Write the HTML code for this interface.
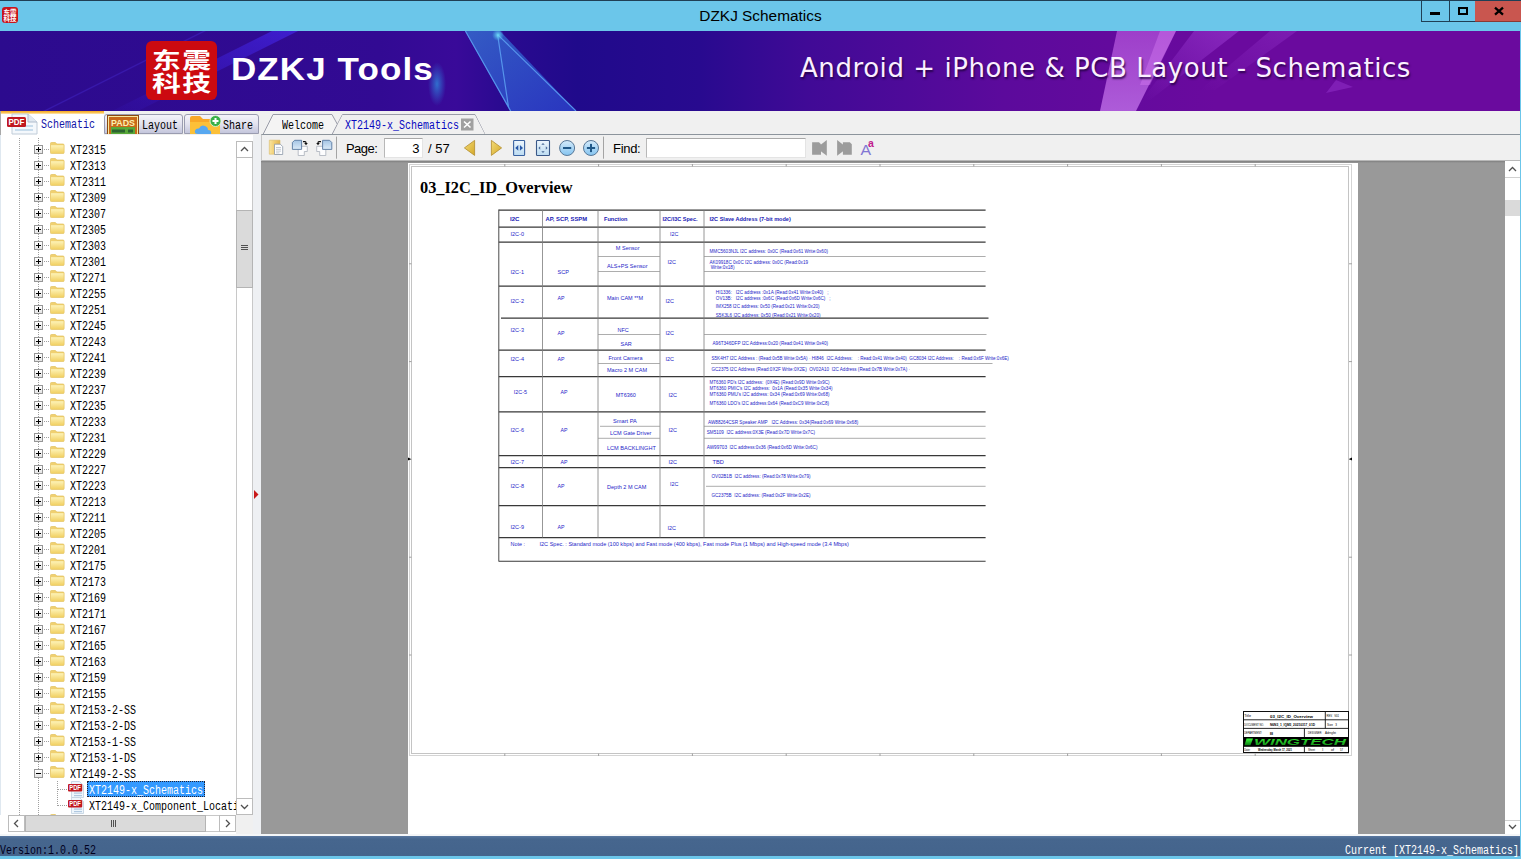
<!DOCTYPE html><html><head><meta charset='utf-8'><title>DZKJ Schematics</title><style>
*{box-sizing:border-box;margin:0;padding:0}
html,body{width:1521px;height:859px;overflow:hidden;background:#6bc6ea}
body{position:relative;font-family:'Liberation Sans',sans-serif}
.abs{position:absolute}
.mono{font-family:'Liberation Mono','Noto Sans CJK SC',monospace;font-size:12px;white-space:pre;line-height:16px;display:inline-block;transform:scaleX(.8333);transform-origin:0 0}
#titlebar{left:0;top:0;width:1521px;height:31px;background:#6bc6ea;border-top:1px solid #1f3f55}
#title{left:0;top:0;width:1521px;height:31px;line-height:31px;text-align:center;font-size:15.4px;color:#000}
#banner{left:0;top:31px;width:1520px;height:80px;overflow:hidden;background:linear-gradient(90deg,#2c0b8e 0%,#320a93 25%,#390a99 30%,#2a0a90 33%,#200a8b 38%,#280a8f 46%,#400a96 53%,#5c0a9c 66%,#6a0a9e 80%,#6a0a9e 100%)}
#tabsrow{left:0;top:111px;width:1520px;height:24px;background:#f0f0f0}
#left{left:0;top:135px;width:253px;height:701px;background:#fff;overflow:hidden;box-shadow:inset 1px 0 0 #dfe8f0}
#split{left:253px;top:135px;width:8px;height:701px;background:#eef0f3}
#toolbar{left:261px;top:134px;width:1259px;height:27px;background:#f0f0f0;border-top:1px solid #8c949c;border-left:1px solid #c8c8c8;border-bottom:1px solid #b8b8b8}
#viewer{left:261px;top:161px;width:1244px;height:673px;background:#999;overflow:hidden}
#vscroll{left:1505px;top:161px;width:15px;height:673px;background:#fff}
#status{left:0;top:836px;width:1520px;height:20px;background:linear-gradient(#5a78a0 0,#46668e 3px,#44648c 100%);color:#fff}
.row{position:absolute;left:0;height:16px;width:236px}
.pm{position:absolute;left:34px;top:4px;width:9px;height:9px;border:1px solid #969696;background:linear-gradient(#fff,#e4e4e4)}
.pm:before{content:'';position:absolute;left:1px;top:3px;width:5px;height:1px;background:#000}
.pm.plus:after{content:'';position:absolute;left:3px;top:1px;width:1px;height:5px;background:#000}
.hd{position:absolute;top:8px;height:1px;background-image:linear-gradient(90deg,#a0a0a0 50%,transparent 50%);background-size:2px 1px}
.vd{position:absolute;width:1px;background-image:linear-gradient(#a0a0a0 50%,transparent 50%);background-size:1px 2px}
.fold{position:absolute;left:50px;top:1px;width:15px;height:12px}
.lbl{position:absolute;top:2px;height:16px;color:#000}
.tbtxt{position:absolute;font-size:13px;line-height:16px;color:#000;white-space:pre}
</style></head><body>
<svg width='0' height='0' style='position:absolute'><defs><linearGradient id='fg' x1='0' y1='0' x2='0' y2='1'><stop offset='0' stop-color='#fdf3b8'/><stop offset='1' stop-color='#f2d164'/></linearGradient></defs></svg>
<div id='titlebar' class='abs'></div>
<div id='title' class='abs'>DZKJ Schematics</div>
<div class='abs' style="left:2px;top:7px;width:16px;height:16px;background:#c8141c;border-radius:3px;color:#fff;font-family:'Noto Sans CJK SC',sans-serif;font-weight:bold;font-size:6.5px;line-height:6.5px;text-align:center;padding-top:1.5px;letter-spacing:0">东震<br>科技</div>
<div class='abs' style='left:1421px;top:1px;width:55px;height:21px;border:1px solid #1f3f55;border-top:none;border-right:none'></div>
<div class='abs' style='left:1449px;top:1px;width:1px;height:20px;background:#1f3f55'></div>
<div class='abs' style='left:1475px;top:1px;width:46px;height:21px;background:#c9564f;border-bottom:1px solid #8a3a36'></div>
<div class='abs' style='left:1430px;top:12px;width:10px;height:3px;background:#000'></div>
<div class='abs' style='left:1458px;top:7px;width:10px;height:8px;border:2px solid #000;border-top-width:2px'></div>
<svg class='abs' style='left:1493px;top:6px' width='12' height='10' viewBox='0 0 12 10'><path d='M2 1.6 L10 8.6 M10 1.6 L2 8.6' stroke='#000' stroke-width='2.3' fill='none'/></svg>
<div id='banner' class='abs'>
<svg class='abs' style='left:0;top:0' width='1520' height='80' viewBox='0 31 1520 80'>
<defs>
<linearGradient id='tri' x1='0' y1='0' x2='1' y2='1'><stop offset='0' stop-color='#3470d0' stop-opacity='.8'/><stop offset='1' stop-color='#2c44d0' stop-opacity='.75'/></linearGradient>
<linearGradient id='pk' x1='0' y1='0' x2='0' y2='1'><stop offset='0' stop-color='#b050d8' stop-opacity='.75'/><stop offset='1' stop-color='#c070e8' stop-opacity='.8'/></linearGradient>
<linearGradient id='st' x1='1' y1='0' x2='0' y2='1'><stop offset='0' stop-color='#4426e8' stop-opacity='.7'/><stop offset='1' stop-color='#3a1cd0' stop-opacity='.1'/></linearGradient>
<linearGradient id='pk2' x1='1' y1='0' x2='0' y2='1'><stop offset='0' stop-color='#a040d8' stop-opacity='.55'/><stop offset='1' stop-color='#a040d8' stop-opacity='0'/></linearGradient>
<radialGradient id='gl2'><stop offset='0' stop-color='#70e0f8' stop-opacity='.95'/><stop offset='1' stop-color='#50c0f0' stop-opacity='0'/></radialGradient>
<radialGradient id='gl'><stop offset='0' stop-color='#2e90e0' stop-opacity='.75'/><stop offset='1' stop-color='#2e80e0' stop-opacity='0'/></radialGradient>
</defs>
<polygon points='272,31 298,31 138,111 112,111' fill='url(#st)'/>
<polygon points='203,31 206,31 46,111 43,111' fill='#4a30e0' opacity='.35'/>
<polygon points='465,31 500,31 576,111 510,111' fill='url(#tri)'/>
<path d='M465.4 31 L510.7 111 M497.6 34.6 L508.5 107 M497.6 34.6 L576 111' stroke='#5a9cf0' stroke-width='1.2' fill='none' opacity='.9'/>
<circle cx='498' cy='35' r='6' fill='url(#gl2)'/>
<ellipse cx='437' cy='84' rx='9' ry='22' fill='url(#gl)'/>
<polygon points='1117,31 1176,31 1136,111 1100,111' fill='url(#pk)'/>
<polygon points='1160,31 1176,31 1150,85 1140,85' fill='#e088f8' opacity='.35'/>
<polygon points='1194,31 1239,31 1150,100 1142,100' fill='url(#pk2)'/>
<polygon points='1270,31 1297,31 1215,90 1200,90' fill='url(#pk2)' opacity='.6'/>
<polygon points='1326,93 1353,87 1336,80' fill='#9030c8' opacity='.55'/>
</svg>
<div class='abs' style="left:146px;top:9.5px;width:71px;height:59px;background:#cc0a10;border-radius:6px"></div>
<div class='abs' id='logotxt' style="left:146px;top:16px;width:71px;text-align:center;color:#fff;font-family:'Noto Sans CJK SC',sans-serif;font-weight:bold;font-size:22px;line-height:23px;letter-spacing:1px;padding-left:1px;white-space:nowrap;transform:scaleX(1.31);transform-origin:50% 0">东震<br>科技</div>
<div class='abs' id='dzkj' style="left:230.5px;top:19.5px;font-family:'Liberation Sans',sans-serif;font-weight:bold;font-size:31.5px;line-height:36px;letter-spacing:1px;color:#fff;white-space:pre;transform:scaleX(1.11);transform-origin:0 0">DZKJ Tools</div>
<div class='abs' id='slogan' style="left:800px;top:20.5px;font-family:'DejaVu Sans','Liberation Sans',sans-serif;font-size:26px;letter-spacing:.56px;line-height:32px;color:#fbf0ff;white-space:pre;text-shadow:1px 2px 2px rgba(30,0,60,.8)">Android + iPhone &amp; PCB Layout - Schematics</div>
</div>
<div id='tabsrow' class='abs'></div>
<div class='abs' style='left:0;top:111px;width:104px;height:24px;background:linear-gradient(#f6a820 0,#fbc860 2px,#fff 3.5px);border-left:1px solid #a8a8a8'></div>
<div class='abs' style='left:104px;top:114px;width:79px;height:20px;background:linear-gradient(#f4f4fa,#e2e2ee 50%,#c4c6dc);border:1px solid #9a9cb0;border-bottom:1px solid #9a9cb0;border-radius:3px 3px 0 0'></div>
<div class='abs' style='left:184px;top:114px;width:75px;height:20px;background:linear-gradient(#f4f4fa,#e2e2ee 50%,#c4c6dc);border:1px solid #9a9cb0;border-radius:3px 3px 0 0'></div>
<svg class='abs' style='left:6px;top:112px' width='34' height='23' viewBox='0 0 34 23'>
<path d='M6 2 H22 L31 10 V22 H6 Z' fill='#f4f8fc' stroke='#c0ccd8' stroke-width='1'/>
<path d='M22 2 V10 H31' fill='#e0e8f0' stroke='#b0bccc' stroke-width='1'/>
<rect x='9' y='13' width='18' height='2' fill='#c8dcec'/><rect x='9' y='17' width='18' height='2' fill='#c8dcec'/>
<rect x='1' y='5' width='19' height='10' rx='1.5' fill='#c01820'/>
<text x='10.5' y='13' font-family='Liberation Sans,sans-serif' font-weight='bold' font-size='8.5' fill='#fff' text-anchor='middle' textLength='16' lengthAdjust='spacingAndGlyphs'>PDF</text>
</svg>
<div class='abs mono' style='left:41px;top:117px;color:#1414a8'>Schematic</div>
<svg class='abs' style='left:107px;top:115px' width='32' height='19' viewBox='0 0 32 19'>
<rect x='0' y='0' width='32' height='19' fill='#8a4a10'/>
<rect x='1' y='1' width='30' height='18' fill='#f8e8a0'/>
<rect x='2' y='2' width='28' height='17' fill='#c8691a'/>
<rect x='4' y='12' width='24' height='7' fill='#58a838'/>
<rect x='5' y='14.5' width='13' height='3' fill='#2c6430'/><rect x='21' y='14.5' width='5' height='3' fill='#2c6430'/>
<text x='16' y='10.6' font-family='Liberation Sans,sans-serif' font-weight='bold' font-size='9.5' fill='#fbf0b0' text-anchor='middle' textLength='24' lengthAdjust='spacingAndGlyphs'>PADS</text>
</svg>
<div class='abs mono' style='left:142px;top:118px;color:#000'>Layout</div>
<svg class='abs' style='left:189px;top:114px' width='34' height='20' viewBox='0 0 34 20'>
<path d='M1 4 Q1 2 3 2 H11 L14 5 H29 Q31 5 31 7 V21 H1 Z' fill='#f8a828'/>
<path d='M1 8 H31 V21 H1 Z' fill='#fcc038'/>
<path d='M9 20 Q5 20 6 16.5 Q7 14 10 14.5 Q12 10.5 16 12 Q19 13 19 16 Q23 16 22 20 Z' fill='#58a8f0'/>
<circle cx='26.5' cy='7' r='5.5' fill='#38b048' stroke='#e8f8e0' stroke-width='.8'/>
<path d='M26.5 4 V10 M23.5 7 H29.5' stroke='#fff' stroke-width='2'/>
</svg>
<div class='abs mono' style='left:223px;top:118px;color:#000'>Share</div>
<svg class='abs' style='left:261px;top:111px' width='1259' height='24' viewBox='261 111 1259 24'>
<path d='M263 134.5 L273 114.5 H332 L337.5 124.5 L332.5 134.5 Z' fill='#f4f4f4' stroke='#9a9ca8' stroke-width='1'/>
<path d='M261 134.5 H332 L342.5 114.5 H475 L485 134.5 H1520' fill='none' stroke='#9a9ca8' stroke-width='1'/>
<path d='M332.5 134.5 L342.5 115 H475 L485 134.5 Z' fill='#f0f0f0'/>
<rect x='461' y='118.5' width='12.5' height='12' fill='#a0a0a0'/>
<path d='M464 121.5 L470.5 127.5 M470.5 121.5 L464 127.5' stroke='#fff' stroke-width='1.6'/>
</svg>
<div class='abs mono' style='left:282px;top:118px;color:#000'>Welcome</div>
<div class='abs mono' style='left:345px;top:118px;color:#0808c0'>XT2149-x_Schematics</div>
<div id='left' class='abs'>
<div class='vd' style='left:19px;top:3px;height:678px'></div>
<div class='vd' style='left:38px;top:3px;height:678px'></div>
<div class='vd' style='left:57px;top:646px;height:25px'></div>
<div class='row' style='top:6px'><div class='pm plus'></div><div class='hd' style='left:44px;width:6px'></div><svg class='fold' viewBox='0 0 15 12'><path d='M.4 1.6 Q.4 .5 1.5 .5 H5.4 L6.8 2 H13 Q14.1 2 14.1 3.1 V10.6 Q14.1 11.6 13 11.6 H1.5 Q.4 11.6 .4 10.6 Z' fill='#f0d070' stroke='#e2c25c' stroke-width='.7'/><path d='M1 3.2 H13.6 V11 H1 Z' fill='url(#fg)'/></svg><div class='lbl mono' style='left:70px'>XT2315</div></div>
<div class='row' style='top:22px'><div class='pm plus'></div><div class='hd' style='left:44px;width:6px'></div><svg class='fold' viewBox='0 0 15 12'><path d='M.4 1.6 Q.4 .5 1.5 .5 H5.4 L6.8 2 H13 Q14.1 2 14.1 3.1 V10.6 Q14.1 11.6 13 11.6 H1.5 Q.4 11.6 .4 10.6 Z' fill='#f0d070' stroke='#e2c25c' stroke-width='.7'/><path d='M1 3.2 H13.6 V11 H1 Z' fill='url(#fg)'/></svg><div class='lbl mono' style='left:70px'>XT2313</div></div>
<div class='row' style='top:38px'><div class='pm plus'></div><div class='hd' style='left:44px;width:6px'></div><svg class='fold' viewBox='0 0 15 12'><path d='M.4 1.6 Q.4 .5 1.5 .5 H5.4 L6.8 2 H13 Q14.1 2 14.1 3.1 V10.6 Q14.1 11.6 13 11.6 H1.5 Q.4 11.6 .4 10.6 Z' fill='#f0d070' stroke='#e2c25c' stroke-width='.7'/><path d='M1 3.2 H13.6 V11 H1 Z' fill='url(#fg)'/></svg><div class='lbl mono' style='left:70px'>XT2311</div></div>
<div class='row' style='top:54px'><div class='pm plus'></div><div class='hd' style='left:44px;width:6px'></div><svg class='fold' viewBox='0 0 15 12'><path d='M.4 1.6 Q.4 .5 1.5 .5 H5.4 L6.8 2 H13 Q14.1 2 14.1 3.1 V10.6 Q14.1 11.6 13 11.6 H1.5 Q.4 11.6 .4 10.6 Z' fill='#f0d070' stroke='#e2c25c' stroke-width='.7'/><path d='M1 3.2 H13.6 V11 H1 Z' fill='url(#fg)'/></svg><div class='lbl mono' style='left:70px'>XT2309</div></div>
<div class='row' style='top:70px'><div class='pm plus'></div><div class='hd' style='left:44px;width:6px'></div><svg class='fold' viewBox='0 0 15 12'><path d='M.4 1.6 Q.4 .5 1.5 .5 H5.4 L6.8 2 H13 Q14.1 2 14.1 3.1 V10.6 Q14.1 11.6 13 11.6 H1.5 Q.4 11.6 .4 10.6 Z' fill='#f0d070' stroke='#e2c25c' stroke-width='.7'/><path d='M1 3.2 H13.6 V11 H1 Z' fill='url(#fg)'/></svg><div class='lbl mono' style='left:70px'>XT2307</div></div>
<div class='row' style='top:86px'><div class='pm plus'></div><div class='hd' style='left:44px;width:6px'></div><svg class='fold' viewBox='0 0 15 12'><path d='M.4 1.6 Q.4 .5 1.5 .5 H5.4 L6.8 2 H13 Q14.1 2 14.1 3.1 V10.6 Q14.1 11.6 13 11.6 H1.5 Q.4 11.6 .4 10.6 Z' fill='#f0d070' stroke='#e2c25c' stroke-width='.7'/><path d='M1 3.2 H13.6 V11 H1 Z' fill='url(#fg)'/></svg><div class='lbl mono' style='left:70px'>XT2305</div></div>
<div class='row' style='top:102px'><div class='pm plus'></div><div class='hd' style='left:44px;width:6px'></div><svg class='fold' viewBox='0 0 15 12'><path d='M.4 1.6 Q.4 .5 1.5 .5 H5.4 L6.8 2 H13 Q14.1 2 14.1 3.1 V10.6 Q14.1 11.6 13 11.6 H1.5 Q.4 11.6 .4 10.6 Z' fill='#f0d070' stroke='#e2c25c' stroke-width='.7'/><path d='M1 3.2 H13.6 V11 H1 Z' fill='url(#fg)'/></svg><div class='lbl mono' style='left:70px'>XT2303</div></div>
<div class='row' style='top:118px'><div class='pm plus'></div><div class='hd' style='left:44px;width:6px'></div><svg class='fold' viewBox='0 0 15 12'><path d='M.4 1.6 Q.4 .5 1.5 .5 H5.4 L6.8 2 H13 Q14.1 2 14.1 3.1 V10.6 Q14.1 11.6 13 11.6 H1.5 Q.4 11.6 .4 10.6 Z' fill='#f0d070' stroke='#e2c25c' stroke-width='.7'/><path d='M1 3.2 H13.6 V11 H1 Z' fill='url(#fg)'/></svg><div class='lbl mono' style='left:70px'>XT2301</div></div>
<div class='row' style='top:134px'><div class='pm plus'></div><div class='hd' style='left:44px;width:6px'></div><svg class='fold' viewBox='0 0 15 12'><path d='M.4 1.6 Q.4 .5 1.5 .5 H5.4 L6.8 2 H13 Q14.1 2 14.1 3.1 V10.6 Q14.1 11.6 13 11.6 H1.5 Q.4 11.6 .4 10.6 Z' fill='#f0d070' stroke='#e2c25c' stroke-width='.7'/><path d='M1 3.2 H13.6 V11 H1 Z' fill='url(#fg)'/></svg><div class='lbl mono' style='left:70px'>XT2271</div></div>
<div class='row' style='top:150px'><div class='pm plus'></div><div class='hd' style='left:44px;width:6px'></div><svg class='fold' viewBox='0 0 15 12'><path d='M.4 1.6 Q.4 .5 1.5 .5 H5.4 L6.8 2 H13 Q14.1 2 14.1 3.1 V10.6 Q14.1 11.6 13 11.6 H1.5 Q.4 11.6 .4 10.6 Z' fill='#f0d070' stroke='#e2c25c' stroke-width='.7'/><path d='M1 3.2 H13.6 V11 H1 Z' fill='url(#fg)'/></svg><div class='lbl mono' style='left:70px'>XT2255</div></div>
<div class='row' style='top:166px'><div class='pm plus'></div><div class='hd' style='left:44px;width:6px'></div><svg class='fold' viewBox='0 0 15 12'><path d='M.4 1.6 Q.4 .5 1.5 .5 H5.4 L6.8 2 H13 Q14.1 2 14.1 3.1 V10.6 Q14.1 11.6 13 11.6 H1.5 Q.4 11.6 .4 10.6 Z' fill='#f0d070' stroke='#e2c25c' stroke-width='.7'/><path d='M1 3.2 H13.6 V11 H1 Z' fill='url(#fg)'/></svg><div class='lbl mono' style='left:70px'>XT2251</div></div>
<div class='row' style='top:182px'><div class='pm plus'></div><div class='hd' style='left:44px;width:6px'></div><svg class='fold' viewBox='0 0 15 12'><path d='M.4 1.6 Q.4 .5 1.5 .5 H5.4 L6.8 2 H13 Q14.1 2 14.1 3.1 V10.6 Q14.1 11.6 13 11.6 H1.5 Q.4 11.6 .4 10.6 Z' fill='#f0d070' stroke='#e2c25c' stroke-width='.7'/><path d='M1 3.2 H13.6 V11 H1 Z' fill='url(#fg)'/></svg><div class='lbl mono' style='left:70px'>XT2245</div></div>
<div class='row' style='top:198px'><div class='pm plus'></div><div class='hd' style='left:44px;width:6px'></div><svg class='fold' viewBox='0 0 15 12'><path d='M.4 1.6 Q.4 .5 1.5 .5 H5.4 L6.8 2 H13 Q14.1 2 14.1 3.1 V10.6 Q14.1 11.6 13 11.6 H1.5 Q.4 11.6 .4 10.6 Z' fill='#f0d070' stroke='#e2c25c' stroke-width='.7'/><path d='M1 3.2 H13.6 V11 H1 Z' fill='url(#fg)'/></svg><div class='lbl mono' style='left:70px'>XT2243</div></div>
<div class='row' style='top:214px'><div class='pm plus'></div><div class='hd' style='left:44px;width:6px'></div><svg class='fold' viewBox='0 0 15 12'><path d='M.4 1.6 Q.4 .5 1.5 .5 H5.4 L6.8 2 H13 Q14.1 2 14.1 3.1 V10.6 Q14.1 11.6 13 11.6 H1.5 Q.4 11.6 .4 10.6 Z' fill='#f0d070' stroke='#e2c25c' stroke-width='.7'/><path d='M1 3.2 H13.6 V11 H1 Z' fill='url(#fg)'/></svg><div class='lbl mono' style='left:70px'>XT2241</div></div>
<div class='row' style='top:230px'><div class='pm plus'></div><div class='hd' style='left:44px;width:6px'></div><svg class='fold' viewBox='0 0 15 12'><path d='M.4 1.6 Q.4 .5 1.5 .5 H5.4 L6.8 2 H13 Q14.1 2 14.1 3.1 V10.6 Q14.1 11.6 13 11.6 H1.5 Q.4 11.6 .4 10.6 Z' fill='#f0d070' stroke='#e2c25c' stroke-width='.7'/><path d='M1 3.2 H13.6 V11 H1 Z' fill='url(#fg)'/></svg><div class='lbl mono' style='left:70px'>XT2239</div></div>
<div class='row' style='top:246px'><div class='pm plus'></div><div class='hd' style='left:44px;width:6px'></div><svg class='fold' viewBox='0 0 15 12'><path d='M.4 1.6 Q.4 .5 1.5 .5 H5.4 L6.8 2 H13 Q14.1 2 14.1 3.1 V10.6 Q14.1 11.6 13 11.6 H1.5 Q.4 11.6 .4 10.6 Z' fill='#f0d070' stroke='#e2c25c' stroke-width='.7'/><path d='M1 3.2 H13.6 V11 H1 Z' fill='url(#fg)'/></svg><div class='lbl mono' style='left:70px'>XT2237</div></div>
<div class='row' style='top:262px'><div class='pm plus'></div><div class='hd' style='left:44px;width:6px'></div><svg class='fold' viewBox='0 0 15 12'><path d='M.4 1.6 Q.4 .5 1.5 .5 H5.4 L6.8 2 H13 Q14.1 2 14.1 3.1 V10.6 Q14.1 11.6 13 11.6 H1.5 Q.4 11.6 .4 10.6 Z' fill='#f0d070' stroke='#e2c25c' stroke-width='.7'/><path d='M1 3.2 H13.6 V11 H1 Z' fill='url(#fg)'/></svg><div class='lbl mono' style='left:70px'>XT2235</div></div>
<div class='row' style='top:278px'><div class='pm plus'></div><div class='hd' style='left:44px;width:6px'></div><svg class='fold' viewBox='0 0 15 12'><path d='M.4 1.6 Q.4 .5 1.5 .5 H5.4 L6.8 2 H13 Q14.1 2 14.1 3.1 V10.6 Q14.1 11.6 13 11.6 H1.5 Q.4 11.6 .4 10.6 Z' fill='#f0d070' stroke='#e2c25c' stroke-width='.7'/><path d='M1 3.2 H13.6 V11 H1 Z' fill='url(#fg)'/></svg><div class='lbl mono' style='left:70px'>XT2233</div></div>
<div class='row' style='top:294px'><div class='pm plus'></div><div class='hd' style='left:44px;width:6px'></div><svg class='fold' viewBox='0 0 15 12'><path d='M.4 1.6 Q.4 .5 1.5 .5 H5.4 L6.8 2 H13 Q14.1 2 14.1 3.1 V10.6 Q14.1 11.6 13 11.6 H1.5 Q.4 11.6 .4 10.6 Z' fill='#f0d070' stroke='#e2c25c' stroke-width='.7'/><path d='M1 3.2 H13.6 V11 H1 Z' fill='url(#fg)'/></svg><div class='lbl mono' style='left:70px'>XT2231</div></div>
<div class='row' style='top:310px'><div class='pm plus'></div><div class='hd' style='left:44px;width:6px'></div><svg class='fold' viewBox='0 0 15 12'><path d='M.4 1.6 Q.4 .5 1.5 .5 H5.4 L6.8 2 H13 Q14.1 2 14.1 3.1 V10.6 Q14.1 11.6 13 11.6 H1.5 Q.4 11.6 .4 10.6 Z' fill='#f0d070' stroke='#e2c25c' stroke-width='.7'/><path d='M1 3.2 H13.6 V11 H1 Z' fill='url(#fg)'/></svg><div class='lbl mono' style='left:70px'>XT2229</div></div>
<div class='row' style='top:326px'><div class='pm plus'></div><div class='hd' style='left:44px;width:6px'></div><svg class='fold' viewBox='0 0 15 12'><path d='M.4 1.6 Q.4 .5 1.5 .5 H5.4 L6.8 2 H13 Q14.1 2 14.1 3.1 V10.6 Q14.1 11.6 13 11.6 H1.5 Q.4 11.6 .4 10.6 Z' fill='#f0d070' stroke='#e2c25c' stroke-width='.7'/><path d='M1 3.2 H13.6 V11 H1 Z' fill='url(#fg)'/></svg><div class='lbl mono' style='left:70px'>XT2227</div></div>
<div class='row' style='top:342px'><div class='pm plus'></div><div class='hd' style='left:44px;width:6px'></div><svg class='fold' viewBox='0 0 15 12'><path d='M.4 1.6 Q.4 .5 1.5 .5 H5.4 L6.8 2 H13 Q14.1 2 14.1 3.1 V10.6 Q14.1 11.6 13 11.6 H1.5 Q.4 11.6 .4 10.6 Z' fill='#f0d070' stroke='#e2c25c' stroke-width='.7'/><path d='M1 3.2 H13.6 V11 H1 Z' fill='url(#fg)'/></svg><div class='lbl mono' style='left:70px'>XT2223</div></div>
<div class='row' style='top:358px'><div class='pm plus'></div><div class='hd' style='left:44px;width:6px'></div><svg class='fold' viewBox='0 0 15 12'><path d='M.4 1.6 Q.4 .5 1.5 .5 H5.4 L6.8 2 H13 Q14.1 2 14.1 3.1 V10.6 Q14.1 11.6 13 11.6 H1.5 Q.4 11.6 .4 10.6 Z' fill='#f0d070' stroke='#e2c25c' stroke-width='.7'/><path d='M1 3.2 H13.6 V11 H1 Z' fill='url(#fg)'/></svg><div class='lbl mono' style='left:70px'>XT2213</div></div>
<div class='row' style='top:374px'><div class='pm plus'></div><div class='hd' style='left:44px;width:6px'></div><svg class='fold' viewBox='0 0 15 12'><path d='M.4 1.6 Q.4 .5 1.5 .5 H5.4 L6.8 2 H13 Q14.1 2 14.1 3.1 V10.6 Q14.1 11.6 13 11.6 H1.5 Q.4 11.6 .4 10.6 Z' fill='#f0d070' stroke='#e2c25c' stroke-width='.7'/><path d='M1 3.2 H13.6 V11 H1 Z' fill='url(#fg)'/></svg><div class='lbl mono' style='left:70px'>XT2211</div></div>
<div class='row' style='top:390px'><div class='pm plus'></div><div class='hd' style='left:44px;width:6px'></div><svg class='fold' viewBox='0 0 15 12'><path d='M.4 1.6 Q.4 .5 1.5 .5 H5.4 L6.8 2 H13 Q14.1 2 14.1 3.1 V10.6 Q14.1 11.6 13 11.6 H1.5 Q.4 11.6 .4 10.6 Z' fill='#f0d070' stroke='#e2c25c' stroke-width='.7'/><path d='M1 3.2 H13.6 V11 H1 Z' fill='url(#fg)'/></svg><div class='lbl mono' style='left:70px'>XT2205</div></div>
<div class='row' style='top:406px'><div class='pm plus'></div><div class='hd' style='left:44px;width:6px'></div><svg class='fold' viewBox='0 0 15 12'><path d='M.4 1.6 Q.4 .5 1.5 .5 H5.4 L6.8 2 H13 Q14.1 2 14.1 3.1 V10.6 Q14.1 11.6 13 11.6 H1.5 Q.4 11.6 .4 10.6 Z' fill='#f0d070' stroke='#e2c25c' stroke-width='.7'/><path d='M1 3.2 H13.6 V11 H1 Z' fill='url(#fg)'/></svg><div class='lbl mono' style='left:70px'>XT2201</div></div>
<div class='row' style='top:422px'><div class='pm plus'></div><div class='hd' style='left:44px;width:6px'></div><svg class='fold' viewBox='0 0 15 12'><path d='M.4 1.6 Q.4 .5 1.5 .5 H5.4 L6.8 2 H13 Q14.1 2 14.1 3.1 V10.6 Q14.1 11.6 13 11.6 H1.5 Q.4 11.6 .4 10.6 Z' fill='#f0d070' stroke='#e2c25c' stroke-width='.7'/><path d='M1 3.2 H13.6 V11 H1 Z' fill='url(#fg)'/></svg><div class='lbl mono' style='left:70px'>XT2175</div></div>
<div class='row' style='top:438px'><div class='pm plus'></div><div class='hd' style='left:44px;width:6px'></div><svg class='fold' viewBox='0 0 15 12'><path d='M.4 1.6 Q.4 .5 1.5 .5 H5.4 L6.8 2 H13 Q14.1 2 14.1 3.1 V10.6 Q14.1 11.6 13 11.6 H1.5 Q.4 11.6 .4 10.6 Z' fill='#f0d070' stroke='#e2c25c' stroke-width='.7'/><path d='M1 3.2 H13.6 V11 H1 Z' fill='url(#fg)'/></svg><div class='lbl mono' style='left:70px'>XT2173</div></div>
<div class='row' style='top:454px'><div class='pm plus'></div><div class='hd' style='left:44px;width:6px'></div><svg class='fold' viewBox='0 0 15 12'><path d='M.4 1.6 Q.4 .5 1.5 .5 H5.4 L6.8 2 H13 Q14.1 2 14.1 3.1 V10.6 Q14.1 11.6 13 11.6 H1.5 Q.4 11.6 .4 10.6 Z' fill='#f0d070' stroke='#e2c25c' stroke-width='.7'/><path d='M1 3.2 H13.6 V11 H1 Z' fill='url(#fg)'/></svg><div class='lbl mono' style='left:70px'>XT2169</div></div>
<div class='row' style='top:470px'><div class='pm plus'></div><div class='hd' style='left:44px;width:6px'></div><svg class='fold' viewBox='0 0 15 12'><path d='M.4 1.6 Q.4 .5 1.5 .5 H5.4 L6.8 2 H13 Q14.1 2 14.1 3.1 V10.6 Q14.1 11.6 13 11.6 H1.5 Q.4 11.6 .4 10.6 Z' fill='#f0d070' stroke='#e2c25c' stroke-width='.7'/><path d='M1 3.2 H13.6 V11 H1 Z' fill='url(#fg)'/></svg><div class='lbl mono' style='left:70px'>XT2171</div></div>
<div class='row' style='top:486px'><div class='pm plus'></div><div class='hd' style='left:44px;width:6px'></div><svg class='fold' viewBox='0 0 15 12'><path d='M.4 1.6 Q.4 .5 1.5 .5 H5.4 L6.8 2 H13 Q14.1 2 14.1 3.1 V10.6 Q14.1 11.6 13 11.6 H1.5 Q.4 11.6 .4 10.6 Z' fill='#f0d070' stroke='#e2c25c' stroke-width='.7'/><path d='M1 3.2 H13.6 V11 H1 Z' fill='url(#fg)'/></svg><div class='lbl mono' style='left:70px'>XT2167</div></div>
<div class='row' style='top:502px'><div class='pm plus'></div><div class='hd' style='left:44px;width:6px'></div><svg class='fold' viewBox='0 0 15 12'><path d='M.4 1.6 Q.4 .5 1.5 .5 H5.4 L6.8 2 H13 Q14.1 2 14.1 3.1 V10.6 Q14.1 11.6 13 11.6 H1.5 Q.4 11.6 .4 10.6 Z' fill='#f0d070' stroke='#e2c25c' stroke-width='.7'/><path d='M1 3.2 H13.6 V11 H1 Z' fill='url(#fg)'/></svg><div class='lbl mono' style='left:70px'>XT2165</div></div>
<div class='row' style='top:518px'><div class='pm plus'></div><div class='hd' style='left:44px;width:6px'></div><svg class='fold' viewBox='0 0 15 12'><path d='M.4 1.6 Q.4 .5 1.5 .5 H5.4 L6.8 2 H13 Q14.1 2 14.1 3.1 V10.6 Q14.1 11.6 13 11.6 H1.5 Q.4 11.6 .4 10.6 Z' fill='#f0d070' stroke='#e2c25c' stroke-width='.7'/><path d='M1 3.2 H13.6 V11 H1 Z' fill='url(#fg)'/></svg><div class='lbl mono' style='left:70px'>XT2163</div></div>
<div class='row' style='top:534px'><div class='pm plus'></div><div class='hd' style='left:44px;width:6px'></div><svg class='fold' viewBox='0 0 15 12'><path d='M.4 1.6 Q.4 .5 1.5 .5 H5.4 L6.8 2 H13 Q14.1 2 14.1 3.1 V10.6 Q14.1 11.6 13 11.6 H1.5 Q.4 11.6 .4 10.6 Z' fill='#f0d070' stroke='#e2c25c' stroke-width='.7'/><path d='M1 3.2 H13.6 V11 H1 Z' fill='url(#fg)'/></svg><div class='lbl mono' style='left:70px'>XT2159</div></div>
<div class='row' style='top:550px'><div class='pm plus'></div><div class='hd' style='left:44px;width:6px'></div><svg class='fold' viewBox='0 0 15 12'><path d='M.4 1.6 Q.4 .5 1.5 .5 H5.4 L6.8 2 H13 Q14.1 2 14.1 3.1 V10.6 Q14.1 11.6 13 11.6 H1.5 Q.4 11.6 .4 10.6 Z' fill='#f0d070' stroke='#e2c25c' stroke-width='.7'/><path d='M1 3.2 H13.6 V11 H1 Z' fill='url(#fg)'/></svg><div class='lbl mono' style='left:70px'>XT2155</div></div>
<div class='row' style='top:566px'><div class='pm plus'></div><div class='hd' style='left:44px;width:6px'></div><svg class='fold' viewBox='0 0 15 12'><path d='M.4 1.6 Q.4 .5 1.5 .5 H5.4 L6.8 2 H13 Q14.1 2 14.1 3.1 V10.6 Q14.1 11.6 13 11.6 H1.5 Q.4 11.6 .4 10.6 Z' fill='#f0d070' stroke='#e2c25c' stroke-width='.7'/><path d='M1 3.2 H13.6 V11 H1 Z' fill='url(#fg)'/></svg><div class='lbl mono' style='left:70px'>XT2153-2-SS</div></div>
<div class='row' style='top:582px'><div class='pm plus'></div><div class='hd' style='left:44px;width:6px'></div><svg class='fold' viewBox='0 0 15 12'><path d='M.4 1.6 Q.4 .5 1.5 .5 H5.4 L6.8 2 H13 Q14.1 2 14.1 3.1 V10.6 Q14.1 11.6 13 11.6 H1.5 Q.4 11.6 .4 10.6 Z' fill='#f0d070' stroke='#e2c25c' stroke-width='.7'/><path d='M1 3.2 H13.6 V11 H1 Z' fill='url(#fg)'/></svg><div class='lbl mono' style='left:70px'>XT2153-2-DS</div></div>
<div class='row' style='top:598px'><div class='pm plus'></div><div class='hd' style='left:44px;width:6px'></div><svg class='fold' viewBox='0 0 15 12'><path d='M.4 1.6 Q.4 .5 1.5 .5 H5.4 L6.8 2 H13 Q14.1 2 14.1 3.1 V10.6 Q14.1 11.6 13 11.6 H1.5 Q.4 11.6 .4 10.6 Z' fill='#f0d070' stroke='#e2c25c' stroke-width='.7'/><path d='M1 3.2 H13.6 V11 H1 Z' fill='url(#fg)'/></svg><div class='lbl mono' style='left:70px'>XT2153-1-SS</div></div>
<div class='row' style='top:614px'><div class='pm plus'></div><div class='hd' style='left:44px;width:6px'></div><svg class='fold' viewBox='0 0 15 12'><path d='M.4 1.6 Q.4 .5 1.5 .5 H5.4 L6.8 2 H13 Q14.1 2 14.1 3.1 V10.6 Q14.1 11.6 13 11.6 H1.5 Q.4 11.6 .4 10.6 Z' fill='#f0d070' stroke='#e2c25c' stroke-width='.7'/><path d='M1 3.2 H13.6 V11 H1 Z' fill='url(#fg)'/></svg><div class='lbl mono' style='left:70px'>XT2153-1-DS</div></div>
<div class='row' style='top:630px'><div class='pm'></div><div class='hd' style='left:44px;width:6px'></div><svg class='fold' viewBox='0 0 15 12'><path d='M.4 1.6 Q.4 .5 1.5 .5 H5.4 L6.8 2 H13 Q14.1 2 14.1 3.1 V10.6 Q14.1 11.6 13 11.6 H1.5 Q.4 11.6 .4 10.6 Z' fill='#f0d070' stroke='#e2c25c' stroke-width='.7'/><path d='M1 3.2 H13.6 V11 H1 Z' fill='url(#fg)'/></svg><div class='lbl mono' style='left:70px'>XT2149-2-SS</div></div>
<div class='row' style='top:646px'><div class='hd' style='left:58px;width:10px'></div><svg style='position:absolute;left:68px;top:0' width='16' height='17' viewBox='0 0 16 17'><path d='M3.5 .5 H11.5 L15.5 4.5 V16.5 H3.5 Z' fill='#eef6fc' stroke='#c0d0e0' stroke-width='.8'/><rect x='6' y='11.5' width='8' height='1.2' fill='#b0c8e0'/><rect x='6' y='14' width='8' height='1.2' fill='#b0c8e0'/><rect x='0' y='3' width='14.2' height='7.6' rx='1' fill='#c01820'/><text x='7.1' y='9.3' font-family='Liberation Sans,sans-serif' font-weight='bold' font-size='6.3' fill='#fff' text-anchor='middle' textLength='11.6' lengthAdjust='spacingAndGlyphs'>PDF</text></svg><div class='abs' style='left:87px;top:0;width:118px;height:16px;background:#3399ff;outline:1px dotted #223;outline-offset:-1px'></div><div class='lbl mono' style='left:89px;color:#fff'>XT2149-x_Schematics</div></div>
<div class='row' style='top:662px'><div class='hd' style='left:58px;width:10px'></div><svg style='position:absolute;left:68px;top:0' width='16' height='17' viewBox='0 0 16 17'><path d='M3.5 .5 H11.5 L15.5 4.5 V16.5 H3.5 Z' fill='#eef6fc' stroke='#c0d0e0' stroke-width='.8'/><rect x='6' y='11.5' width='8' height='1.2' fill='#b0c8e0'/><rect x='6' y='14' width='8' height='1.2' fill='#b0c8e0'/><rect x='0' y='3' width='14.2' height='7.6' rx='1' fill='#c01820'/><text x='7.1' y='9.3' font-family='Liberation Sans,sans-serif' font-weight='bold' font-size='6.3' fill='#fff' text-anchor='middle' textLength='11.6' lengthAdjust='spacingAndGlyphs'>PDF</text></svg><div class='lbl mono' style='left:89px'>XT2149-x_Component_Location</div></div>
<div class='row' style='top:678px'><svg class='fold' viewBox='0 0 15 12'><path d='M.4 1.6 Q.4 .5 1.5 .5 H5.4 L6.8 2 H13 Q14.1 2 14.1 3.1 V10.6 Q14.1 11.6 13 11.6 H1.5 Q.4 11.6 .4 10.6 Z' fill='#f0d070' stroke='#e2c25c' stroke-width='.7'/><path d='M1 3.2 H13.6 V11 H1 Z' fill='url(#fg)'/></svg></div>
<div class='abs' style='left:236px;top:6px;width:17px;height:673px;background:#fff;border:1px solid #c8c8c8'></div>
<div class='abs' style='left:236px;top:6px;width:17px;height:17px;border:1px solid #bcbcbc;background:#fff'></div>
<svg class='abs' style='left:240px;top:11px' width='9' height='6'><path d='M1 5 L4.5 1.5 L8 5' stroke='#505050' stroke-width='1.3' fill='none'/></svg>
<div class='abs' style='left:236px;top:75px;width:17px;height:78px;background:#dadada;border:1px solid #b4b4b4'></div>
<div class='abs' style='left:241px;top:110px;width:7px;height:1px;background:#505050;box-shadow:0 2px 0 #505050,0 4px 0 #505050'></div>
<div class='abs' style='left:236px;top:663px;width:17px;height:17px;border:1px solid #bcbcbc;background:#fff'></div>
<svg class='abs' style='left:240px;top:669px' width='9' height='6'><path d='M1 1 L4.5 4.5 L8 1' stroke='#505050' stroke-width='1.3' fill='none'/></svg>
<div class='abs' style='left:0;top:680px;width:253px;height:21px;background:#fff'></div>
<div class='abs' style='left:236px;top:680px;width:17px;height:21px;background:#f0f0f0'></div>
<div class='abs' style='left:8px;top:680px;width:228px;height:17px;background:#fff;border:1px solid #c8c8c8'></div>
<div class='abs' style='left:8px;top:680px;width:17px;height:17px;border:1px solid #bcbcbc;background:#fff'></div>
<svg class='abs' style='left:13px;top:684px' width='6' height='9'><path d='M5 1 L1.5 4.5 L5 8' stroke='#505050' stroke-width='1.3' fill='none'/></svg>
<div class='abs' style='left:25px;top:680px;width:181px;height:17px;background:#dadada;border:1px solid #b4b4b4'></div>
<div class='abs' style='left:111px;top:685px;width:1px;height:7px;background:#505050;box-shadow:2px 0 0 #505050,4px 0 0 #505050'></div>
<div class='abs' style='left:219px;top:680px;width:17px;height:17px;border:1px solid #bcbcbc;background:#fff'></div>
<svg class='abs' style='left:225px;top:684px' width='6' height='9'><path d='M1 1 L4.5 4.5 L1 8' stroke='#505050' stroke-width='1.3' fill='none'/></svg>
</div>
<div id='split' class='abs'></div>
<svg class='abs' style='left:254px;top:490px' width='5' height='9'><path d='M0 0 L4.5 4.5 L0 9 Z' fill='#c81818'/></svg>
<div id='toolbar' class='abs'></div>
<svg class='abs' style='left:261px;top:134px' width='640' height='27' viewBox='261 134 640 27'>
<defs><linearGradient id='yg' x1='0' y1='0' x2='1' y2='0'><stop offset='0' stop-color='#f8e4a0'/><stop offset='.5' stop-color='#f0cc70'/><stop offset='1' stop-color='#e0b450'/></linearGradient><linearGradient id='bg1' x1='0' y1='0' x2='0' y2='1'><stop offset='0' stop-color='#a4c4e4'/><stop offset='1' stop-color='#dcebf8'/></linearGradient><linearGradient id='gd' x1='0' y1='0' x2='1' y2='1'><stop offset='0' stop-color='#f4dc78'/><stop offset='1' stop-color='#d4a828'/></linearGradient><linearGradient id='zc' x1='0' y1='0' x2='0' y2='1'><stop offset='0' stop-color='#d4eafa'/><stop offset='1' stop-color='#84c4f0'/></linearGradient><linearGradient id='fw' x1='0' y1='0' x2='0' y2='1'><stop offset='0' stop-color='#eef6fd'/><stop offset='1' stop-color='#bcdcf2'/></linearGradient></defs>
<path d='M269.3 140.2 H280 V154.2 H269.3 Z' fill='url(#yg)' stroke='#d8b868' stroke-width='.6'/>
<path d='M274.5 144.2 H280.3 L282.7 146.6 V154.5 H274.5 Z' fill='#fdfdfe' stroke='#8c98a8' stroke-width='.8'/>
<path d='M276 147.5 H281 M276 149.3 H281 M276 151.1 H281 M276 152.9 H279.5' stroke='#9aa8b8' stroke-width='.6'/>
<path d='M298.2 146.3 H307.3 V151.5 H304.3 V155.5 H298.2 Z' fill='#fdfdfe' stroke='#aab0ba' stroke-width='.8'/>
<path d='M294.6 140.3 H301.6 V149.4 H292.4 V142.5 Z' fill='url(#bg1)' stroke='#5878a0' stroke-width='.9'/>
<path d='M303 141.6 H305 Q306 141.6 306 142.8 V143.4' fill='none' stroke='#101010' stroke-width='1.2'/><path d='M304.2 143 H307.8 L306 145.2 Z' fill='#101010'/>
<path d='M325.8 146.3 H316.7 V151.5 H319.7 V155.5 H325.8 Z' fill='#fdfdfe' stroke='#aab0ba' stroke-width='.8'/>
<path d='M322.6 140.3 H329.6 L331.8 142.5 V149.4 H322.6 Z' fill='url(#bg1)' stroke='#5878a0' stroke-width='.9'/>
<path d='M321 141.6 H319 Q318 141.6 318 142.8 V143.4' fill='none' stroke='#101010' stroke-width='1.2'/><path d='M316.2 143 H319.8 L318 145.2 Z' fill='#101010'/>
<path d='M336.5 136.6 V158.7 M603.5 136.6 V158.7' stroke='#a4a4a4' stroke-width='1'/>
<path d='M474.6 140.4 V155.4 L464.4 147.9 Z' fill='url(#gd)' stroke='#b89438' stroke-width='.9' stroke-linejoin='round'/>
<path d='M491.4 140.4 V155.4 L501.6 147.9 Z' fill='url(#gd)' stroke='#b89438' stroke-width='.9' stroke-linejoin='round'/>
<rect x='513.6' y='140.5' width='11' height='15' rx='.8' fill='url(#fw)' stroke='#3a62a0' stroke-width='1.1'/>
<path d='M518.3 145 V150.8 L515.2 147.9 Z M519.9 145 V150.8 L523 147.9 Z' fill='#2858a8'/>
<rect x='536.5' y='140.5' width='13' height='15' rx='.8' fill='url(#fw)' stroke='#3a5888' stroke-width='1.1'/>
<path d='M543 143 L541.3 144.8 H544.7 Z M543 153 L541.3 151.2 H544.7 Z M538.4 148 L540.2 146.2 V149.8 Z M547.6 148 L545.8 146.2 V149.8 Z' fill='#4a6a98'/>
<circle cx='567.1' cy='148' r='7.5' fill='url(#zc)' stroke='#587898' stroke-width='1'/>
<rect x='563' y='147' width='8.2' height='2' fill='#205888'/>
<circle cx='591' cy='148' r='7.5' fill='url(#zc)' stroke='#587898' stroke-width='1'/>
<rect x='586.9' y='147' width='8.2' height='2' fill='#205888'/><rect x='590' y='143.9' width='2' height='8.2' fill='#205888'/>
<path d='M812.1 142.2 H819 L821 144.2 V154.8 H812.1 Z' fill='#9c9c9c'/><path d='M826.8 140 V155.8 L816.5 147.9 Z' fill='#9c9c9c'/>
<path d='M851.8 144.2 L849.8 142.2 H842.9 V154.8 H851.8 Z' fill='#9c9c9c'/><path d='M837.1 140 V155.8 L847.4 147.9 Z' fill='#9c9c9c'/>
<text x='860.6' y='155' font-family="'Liberation Sans',sans-serif" font-size='15' fill='#8276d4' textLength='10.6' lengthAdjust='spacingAndGlyphs'>A</text>
<text x='868' y='147.3' font-family="'Liberation Sans',sans-serif" font-weight='bold' font-size='10.5' fill='#c0208c'>a</text>
</svg>
<div class='tbtxt' style='left:346px;top:141px;letter-spacing:-.55px'>Page:</div>
<div class='abs' style='left:384px;top:138px;width:39px;height:20px;background:#fff;border:1px solid #e4e4e4;border-top-color:#a8a8a8;border-left-color:#b8b8b8'></div>
<div class='tbtxt' style='left:384px;top:141px;width:35.5px;text-align:right'>3</div>
<div class='tbtxt' style='left:428px;top:141px'>/ 57</div>
<div class='tbtxt' style='left:613px;top:141px;letter-spacing:-.3px'>Find:</div>
<div class='abs' style='left:646px;top:138px;width:160px;height:20px;background:#fff;border:1px solid #e4e4e4;border-top-color:#a8a8a8;border-left-color:#b8b8b8'></div>
<div id='viewer' class='abs'>
<div class='abs' style='left:0;top:0;width:1244px;height:2px;background:linear-gradient(#808080,#999)'></div>
<div class='abs' style='left:147px;top:2px;width:950px;height:680px;background:#fff'></div>
<svg class='abs' style='left:0;top:0' width='1244' height='673' viewBox='261 161 1244 673' font-family="'Liberation Sans',sans-serif">
<rect x='409.5' y='164.5' width='942' height='591' fill='none' stroke='#d4d4d4' stroke-width='1'/>
<rect x='411.5' y='166.5' width='937' height='587' fill='none' stroke='#c4c4c4' stroke-width='1'/>
<path d='M504.8 164 V166.5 M504.8 753.5 V756 M598.6 164 V166.5 M598.6 753.5 V756 M692.4 164 V166.5 M692.4 753.5 V756 M786.2 164 V166.5 M786.2 753.5 V756 M880.0 164 V166.5 M880.0 753.5 V756 M973.8 164 V166.5 M973.8 753.5 V756 M1067.6 164 V166.5 M1067.6 753.5 V756 M1161.4 164 V166.5 M1161.4 753.5 V756 M1255.2 164 V166.5 M1255.2 753.5 V756 M409 263.8 H411.5 M1349 263.8 H1352 M409 361.6 H411.5 M1349 361.6 H1352 M409 459.4 H411.5 M1349 459.4 H1352 M409 557.2 H411.5 M1349 557.2 H1352 M409 655.0 H411.5 M1349 655.0 H1352' stroke='#a0a0a0' stroke-width='1' fill='none'/>
<path d='M408 457.5 L411 459 L408 460.5 Z M1352 457.5 L1349 459 L1352 460.5 Z' fill='#000'/>
<text x='420' y='192.6' font-family="'Liberation Serif',serif" font-weight='bold' font-size='16.3' fill='#000' textLength='152.5' lengthAdjust='spacingAndGlyphs'>03_I2C_ID_Overview</text>
<path d='M498.8 210.0 H985.6 M498.8 227.0 H985.6 M498.8 242.0 H985.6 M498.8 286.0 H985.6 M498.8 350.0 H985.6 M498.8 376.5 H985.6 M498.8 411.8 H985.6 M498.8 455.5 H985.6 M498.8 467.5 H985.6 M498.8 505.5 H985.6 M498.8 537.5 H985.6 M501 318 H988.5' stroke='#383838' stroke-width='1.25' fill='none'/>
<path d='M498.8 561.3 H985.6' stroke='#383838' stroke-width='1.1' fill='none'/>
<path d='M498.8 209.5 V561.5' stroke='#4a4a4a' stroke-width='1' fill='none'/>
<path d='M542.5 210 V537.5 M598 210 V537.5 M660 210 V537.5 M704 210 V537.5' stroke='#7c7c7c' stroke-width='.8' fill='none'/>
<path d='M598 256.5 H660 M598 271.5 H660 M704 256.5 H985.6 M704 271.5 H985.6 M598 334.5 H660 M704 334.5 H986.5 M598 363.5 H660 M711 363.5 H992.5 M600 426.3 H660 M598 438.3 H660 M704 426.3 H985.6 M704 438.3 H985.6 M706 486.3 H985.6' stroke='#989898' stroke-width='.8' fill='none'/>
<text x='510.0' y='221.2' font-size='5.8' font-weight='bold' fill='#1818b4' textLength='9.5' lengthAdjust='spacingAndGlyphs' xml:space='preserve'>I2C</text>
<text x='545.5' y='221.2' font-size='5.8' font-weight='bold' fill='#1818b4' textLength='41.5' lengthAdjust='spacingAndGlyphs' xml:space='preserve'>AP, SCP, SSPM</text>
<text x='604.0' y='221.2' font-size='5.8' font-weight='bold' fill='#1818b4' textLength='23.5' lengthAdjust='spacingAndGlyphs' xml:space='preserve'>Function</text>
<text x='662.5' y='221.2' font-size='5.8' font-weight='bold' fill='#1818b4' textLength='35.0' lengthAdjust='spacingAndGlyphs' xml:space='preserve'>I2C/I3C Spec.</text>
<text x='709.5' y='221.2' font-size='5.8' font-weight='bold' fill='#1818b4' textLength='81.3' lengthAdjust='spacingAndGlyphs' xml:space='preserve'>I2C Slave Address (7-bit mode)</text>
<text x='510.5' y='235.5' font-size='5.6' fill='#2424c8' textLength='13.5' lengthAdjust='spacingAndGlyphs' xml:space='preserve'>I2C-0</text>
<text x='670.0' y='235.5' font-size='5.6' fill='#2424c8' textLength='8.5' lengthAdjust='spacingAndGlyphs' xml:space='preserve'>I2C</text>
<text x='510.5' y='274.1' font-size='5.6' fill='#2424c8' textLength='13.5' lengthAdjust='spacingAndGlyphs' xml:space='preserve'>I2C-1</text>
<text x='557.5' y='274.1' font-size='5.6' fill='#2424c8' textLength='11.5' lengthAdjust='spacingAndGlyphs' xml:space='preserve'>SCP</text>
<text x='615.8' y='250.3' font-size='5.6' fill='#2424c8' textLength='23.7' lengthAdjust='spacingAndGlyphs' xml:space='preserve'>M Sensor</text>
<text x='607.0' y='268.1' font-size='5.6' fill='#2424c8' textLength='40.5' lengthAdjust='spacingAndGlyphs' xml:space='preserve'>ALS+PS Sensor</text>
<text x='667.5' y='263.8' font-size='5.6' fill='#2424c8' textLength='8.5' lengthAdjust='spacingAndGlyphs' xml:space='preserve'>I2C</text>
<text x='709.5' y='252.5' font-size='4.7' fill='#2424c8' textLength='118.5' lengthAdjust='spacingAndGlyphs' xml:space='preserve'>MMC5603NJL I2C address: 0x0C (Read:0x61 Write:0x60)</text>
<text x='709.5' y='264.0' font-size='4.7' fill='#2424c8' textLength='98.5' lengthAdjust='spacingAndGlyphs' xml:space='preserve'>AK09918C 0x0C I2C address: 0x0C (Read:0x19</text>
<text x='710.8' y='269.0' font-size='4.7' fill='#2424c8' textLength='23.7' lengthAdjust='spacingAndGlyphs' xml:space='preserve'>Write:0x18)</text>
<text x='510.5' y='303.1' font-size='5.6' fill='#2424c8' textLength='13.5' lengthAdjust='spacingAndGlyphs' xml:space='preserve'>I2C-2</text>
<text x='557.5' y='300.1' font-size='5.6' fill='#2424c8' textLength='7.0' lengthAdjust='spacingAndGlyphs' xml:space='preserve'>AP</text>
<text x='607.0' y='300.1' font-size='5.6' fill='#2424c8' textLength='36.0' lengthAdjust='spacingAndGlyphs' xml:space='preserve'>Main CAM **M</text>
<text x='665.5' y='303.1' font-size='5.6' fill='#2424c8' textLength='8.5' lengthAdjust='spacingAndGlyphs' xml:space='preserve'>I2C</text>
<text x='715.8' y='293.5' font-size='4.7' fill='#2424c8' textLength='112.7' lengthAdjust='spacingAndGlyphs' xml:space='preserve'>HI1336:   I2C address :0x1A (Read:0x41 Write:0x40)   ;</text>
<text x='715.8' y='299.5' font-size='4.7' fill='#2424c8' textLength='114.7' lengthAdjust='spacingAndGlyphs' xml:space='preserve'>OV13B:   I2C address :0x6C (Read:0x6D Write:0x6C)   ;</text>
<text x='715.8' y='308.0' font-size='4.7' fill='#2424c8' textLength='103.7' lengthAdjust='spacingAndGlyphs' xml:space='preserve'>IMX258 I2C address: 0x50 (Read:0x21 Write:0x20)</text>
<text x='715.8' y='317.0' font-size='4.7' fill='#2424c8' textLength='104.7' lengthAdjust='spacingAndGlyphs' xml:space='preserve'>S5K3L6 I2C address: 0x50 (Read:0x21 Write:0x20)</text>
<text x='510.5' y='332.3' font-size='5.6' fill='#2424c8' textLength='13.5' lengthAdjust='spacingAndGlyphs' xml:space='preserve'>I2C-3</text>
<text x='557.5' y='335.3' font-size='5.6' fill='#2424c8' textLength='7.0' lengthAdjust='spacingAndGlyphs' xml:space='preserve'>AP</text>
<text x='617.5' y='332.3' font-size='5.6' fill='#2424c8' textLength='11.3' lengthAdjust='spacingAndGlyphs' xml:space='preserve'>NFC</text>
<text x='620.5' y='345.5' font-size='5.6' fill='#2424c8' textLength='11.3' lengthAdjust='spacingAndGlyphs' xml:space='preserve'>SAR</text>
<text x='665.5' y='335.3' font-size='5.6' fill='#2424c8' textLength='8.5' lengthAdjust='spacingAndGlyphs' xml:space='preserve'>I2C</text>
<text x='712.5' y='345.0' font-size='4.7' fill='#2424c8' textLength='115.5' lengthAdjust='spacingAndGlyphs' xml:space='preserve'>A96T346DFP I2C Address:0x20 (Read:0x41 Write:0x40)</text>
<text x='510.5' y='361.3' font-size='5.6' fill='#2424c8' textLength='13.5' lengthAdjust='spacingAndGlyphs' xml:space='preserve'>I2C-4</text>
<text x='557.5' y='361.3' font-size='5.6' fill='#2424c8' textLength='7.0' lengthAdjust='spacingAndGlyphs' xml:space='preserve'>AP</text>
<text x='608.5' y='360.3' font-size='5.6' fill='#2424c8' textLength='34.0' lengthAdjust='spacingAndGlyphs' xml:space='preserve'>Front Camera</text>
<text x='607.0' y='372.1' font-size='5.6' fill='#2424c8' textLength='40.0' lengthAdjust='spacingAndGlyphs' xml:space='preserve'>Macro 2 M CAM</text>
<text x='665.5' y='361.3' font-size='5.6' fill='#2424c8' textLength='8.5' lengthAdjust='spacingAndGlyphs' xml:space='preserve'>I2C</text>
<text x='711.5' y='359.5' font-size='4.7' fill='#2424c8' textLength='297.3' lengthAdjust='spacingAndGlyphs' xml:space='preserve'>S5K4H7 I2C Address : (Read:0x5B Write:0x5A) · HI846  I2C Address:    : Read:0x41 Write:0x40)  GC8034 I2C Address:    : Read:0x6F Write:0x6E)</text>
<text x='711.5' y='371.3' font-size='4.7' fill='#2424c8' textLength='198.5' lengthAdjust='spacingAndGlyphs' xml:space='preserve'>GC2375 I2C Address (Read:0X2F Write:0X2E)  OV02A10  I2C Address (Read:0x7B Write:0x7A) ·</text>
<text x='513.8' y='394.1' font-size='5.6' fill='#2424c8' textLength='13.2' lengthAdjust='spacingAndGlyphs' xml:space='preserve'>I2C-5</text>
<text x='560.5' y='394.1' font-size='5.6' fill='#2424c8' textLength='7.0' lengthAdjust='spacingAndGlyphs' xml:space='preserve'>AP</text>
<text x='615.8' y='396.8' font-size='5.6' fill='#2424c8' textLength='20.0' lengthAdjust='spacingAndGlyphs' xml:space='preserve'>MT6360</text>
<text x='668.5' y='396.8' font-size='5.6' fill='#2424c8' textLength='8.5' lengthAdjust='spacingAndGlyphs' xml:space='preserve'>I2C</text>
<text x='709.5' y='384.3' font-size='4.7' fill='#2424c8' textLength='120.0' lengthAdjust='spacingAndGlyphs' xml:space='preserve'>MT6360 PD&#x27;s I2C address:  (0X4E) (Read:0x9D Write:0x9C)</text>
<text x='709.5' y='390.2' font-size='4.7' fill='#2424c8' textLength='123.0' lengthAdjust='spacingAndGlyphs' xml:space='preserve'>MT6360 PMIC&#x27;s I2C address:  0x1A (Read:0x35 Write:0x34)</text>
<text x='709.5' y='396.0' font-size='4.7' fill='#2424c8' textLength='120.0' lengthAdjust='spacingAndGlyphs' xml:space='preserve'>MT6360 PMU&#x27;s I2C address: 0x34 (Read:0x69 Write:0x68)</text>
<text x='709.5' y='404.8' font-size='4.7' fill='#2424c8' textLength='119.5' lengthAdjust='spacingAndGlyphs' xml:space='preserve'>MT6360 LDO&#x27;s I2C address:0x64 (Read:0xC9 Write:0xC8)</text>
<text x='510.5' y='431.8' font-size='5.6' fill='#2424c8' textLength='13.5' lengthAdjust='spacingAndGlyphs' xml:space='preserve'>I2C-6</text>
<text x='560.5' y='431.8' font-size='5.6' fill='#2424c8' textLength='7.0' lengthAdjust='spacingAndGlyphs' xml:space='preserve'>AP</text>
<text x='613.0' y='423.3' font-size='5.6' fill='#2424c8' textLength='23.8' lengthAdjust='spacingAndGlyphs' xml:space='preserve'>Smart PA</text>
<text x='610.0' y='435.1' font-size='5.6' fill='#2424c8' textLength='41.3' lengthAdjust='spacingAndGlyphs' xml:space='preserve'>LCM Gate Driver</text>
<text x='607.0' y='449.6' font-size='5.6' fill='#2424c8' textLength='48.8' lengthAdjust='spacingAndGlyphs' xml:space='preserve'>LCM BACKLINGHT</text>
<text x='668.5' y='431.8' font-size='5.6' fill='#2424c8' textLength='8.5' lengthAdjust='spacingAndGlyphs' xml:space='preserve'>I2C</text>
<text x='708.0' y='424.0' font-size='4.7' fill='#2424c8' textLength='150.3' lengthAdjust='spacingAndGlyphs' xml:space='preserve'>AW88264CSR Speaker AMP   I2C Address: 0x34(Read:0x69 Write:0x68)</text>
<text x='706.8' y='434.3' font-size='4.7' fill='#2424c8' textLength='108.2' lengthAdjust='spacingAndGlyphs' xml:space='preserve'>SM5109  I2C address:0X3E (Read:0x7D Write:0x7C)</text>
<text x='706.8' y='449.0' font-size='4.7' fill='#2424c8' textLength='110.7' lengthAdjust='spacingAndGlyphs' xml:space='preserve'>AW99703  I2C address:0x36 (Read:0x6D Write:0x6C)</text>
<text x='510.5' y='464.3' font-size='5.6' fill='#2424c8' textLength='13.5' lengthAdjust='spacingAndGlyphs' xml:space='preserve'>I2C-7</text>
<text x='560.5' y='464.3' font-size='5.6' fill='#2424c8' textLength='7.0' lengthAdjust='spacingAndGlyphs' xml:space='preserve'>AP</text>
<text x='668.5' y='464.3' font-size='5.6' fill='#2424c8' textLength='8.5' lengthAdjust='spacingAndGlyphs' xml:space='preserve'>I2C</text>
<text x='712.5' y='464.3' font-size='5.6' fill='#2424c8' textLength='11.3' lengthAdjust='spacingAndGlyphs' xml:space='preserve'>TBD</text>
<text x='510.5' y='487.6' font-size='5.6' fill='#2424c8' textLength='13.5' lengthAdjust='spacingAndGlyphs' xml:space='preserve'>I2C-8</text>
<text x='557.5' y='487.6' font-size='5.6' fill='#2424c8' textLength='7.0' lengthAdjust='spacingAndGlyphs' xml:space='preserve'>AP</text>
<text x='607.0' y='489.1' font-size='5.6' fill='#2424c8' textLength='39.3' lengthAdjust='spacingAndGlyphs' xml:space='preserve'>Depth 2 M CAM</text>
<text x='670.0' y='486.3' font-size='5.6' fill='#2424c8' textLength='8.5' lengthAdjust='spacingAndGlyphs' xml:space='preserve'>I2C</text>
<text x='711.5' y='478.0' font-size='4.7' fill='#2424c8' textLength='99.0' lengthAdjust='spacingAndGlyphs' xml:space='preserve'>OV02B1B  I2C address: (Read:0x78 Write:0x79)</text>
<text x='711.5' y='497.0' font-size='4.7' fill='#2424c8' textLength='99.0' lengthAdjust='spacingAndGlyphs' xml:space='preserve'>GC2375B  I2C address: (Read:0x2F Write:0x2E)</text>
<text x='510.5' y='528.6' font-size='5.6' fill='#2424c8' textLength='13.5' lengthAdjust='spacingAndGlyphs' xml:space='preserve'>I2C-9</text>
<text x='557.5' y='528.6' font-size='5.6' fill='#2424c8' textLength='7.0' lengthAdjust='spacingAndGlyphs' xml:space='preserve'>AP</text>
<text x='667.5' y='530.3' font-size='5.6' fill='#2424c8' textLength='8.5' lengthAdjust='spacingAndGlyphs' xml:space='preserve'>I2C</text>
<text x='510.5' y='546.3' font-size='5.6' fill='#2424c8' textLength='14.5' lengthAdjust='spacingAndGlyphs' xml:space='preserve'>Note :</text>
<text x='539.5' y='546.3' font-size='5.6' fill='#2424c8' textLength='309.3' lengthAdjust='spacingAndGlyphs' xml:space='preserve'>I2C Spec. : Standard mode (100 kbps) and Fast mode (400 kbps), Fast mode Plus (1 Mbps) and High-speed mode (3.4 Mbps)</text>
<rect x='1243.5' y='711.5' width='105' height='41' fill='#fff' stroke='#101010' stroke-width='1'/>
<path d='M1243.5 719.8 H1348.5 M1243.5 728.4 H1348.5 M1325.3 711.5 V728.4 M1304.4 728.4 V737 M1304.4 746.6 V752.5' stroke='#101010' stroke-width='.9' fill='none'/>
<rect x='1243.5' y='737' width='105' height='9.8' fill='#000'/>
<defs><linearGradient id='wg' x1='0' y1='0' x2='0' y2='1'><stop offset='0' stop-color='#38ff38'/><stop offset='1' stop-color='#0c7a14'/></linearGradient></defs>
<path d='M1246.5 738.6 H1253 L1250.5 745.2 H1244.5 Z' fill='url(#wg)'/>
<text x='1254' y='745.3' font-weight='bold' font-style='italic' font-size='9.4' fill='url(#wg)' textLength='92' lengthAdjust='spacingAndGlyphs'>WINGTECH</text>
<text x='1244.2' y='717.1' font-size='2.8' fill='#000' textLength='6.8' lengthAdjust='spacingAndGlyphs' xml:space='preserve'>Title</text>
<text x='1270.0' y='718.1' font-size='4.2' font-weight='bold' fill='#000' textLength='43.0' lengthAdjust='spacingAndGlyphs' xml:space='preserve'>03_I2C_ID_Overview</text>
<text x='1326.5' y='717.1' font-size='2.8' fill='#000' textLength='12.5' lengthAdjust='spacingAndGlyphs' xml:space='preserve'>REV.  V01</text>
<text x='1244.2' y='725.6' font-size='2.8' fill='#000' textLength='19.8' lengthAdjust='spacingAndGlyphs' xml:space='preserve'>DOCUMENT NO.</text>
<text x='1270.0' y='726.1' font-size='3.6' font-weight='bold' fill='#000' textLength='45.0' lengthAdjust='spacingAndGlyphs' xml:space='preserve'>N6N3_1_IQM3_20210317_01D</text>
<text x='1327.0' y='725.6' font-size='2.8' fill='#000' textLength='10.0' lengthAdjust='spacingAndGlyphs' xml:space='preserve'>Size   3</text>
<text x='1244.2' y='734.3' font-size='2.8' fill='#000' textLength='17.8' lengthAdjust='spacingAndGlyphs' xml:space='preserve'>DEPARTMENT:</text>
<text x='1270.0' y='734.5' font-size='3.2' font-weight='bold' fill='#000' textLength='3.0' lengthAdjust='spacingAndGlyphs' xml:space='preserve'>BB</text>
<text x='1308.0' y='734.3' font-size='2.8' fill='#000' textLength='14.0' lengthAdjust='spacingAndGlyphs' xml:space='preserve'>DESIGNER:</text>
<text x='1325.0' y='734.3' font-size='2.8' fill='#000' textLength='11.0' lengthAdjust='spacingAndGlyphs' xml:space='preserve'>Adrngfei</text>
<text x='1244.2' y='750.9' font-size='2.8' fill='#000' textLength='6.3' lengthAdjust='spacingAndGlyphs' xml:space='preserve'>Date:</text>
<text x='1258.0' y='751.1' font-size='3.2' font-weight='bold' fill='#000' textLength='34.0' lengthAdjust='spacingAndGlyphs' xml:space='preserve'>Wednesday, March 17, 2021</text>
<text x='1308.0' y='750.9' font-size='2.8' fill='#000' textLength='7.0' lengthAdjust='spacingAndGlyphs' xml:space='preserve'>Sheet</text>
<text x='1322.0' y='750.9' font-size='2.8' fill='#000' textLength='1.2' lengthAdjust='spacingAndGlyphs' xml:space='preserve'>3</text>
<text x='1331.0' y='750.9' font-size='2.8' fill='#000' textLength='3.0' lengthAdjust='spacingAndGlyphs' xml:space='preserve'>of</text>
<text x='1340.0' y='750.9' font-size='2.8' fill='#000' textLength='3.0' lengthAdjust='spacingAndGlyphs' xml:space='preserve'>57</text>
</svg>
</div>
<div id='vscroll' class='abs'></div>
<div class='abs' style='left:1505px;top:161px;width:15px;height:17px;border-bottom:1px solid #d0d0d0'></div>
<svg class='abs' style='left:1508px;top:166px' width='9' height='6'><path d='M1 5 L4.5 1.5 L8 5' stroke='#505050' stroke-width='1.3' fill='none'/></svg>
<div class='abs' style='left:1505px;top:200px;width:15px;height:16px;background:#dadada'></div>
<div class='abs' style='left:1505px;top:820px;width:15px;height:14px;border-top:1px solid #d0d0d0'></div>
<svg class='abs' style='left:1508px;top:824px' width='9' height='6'><path d='M1 1 L4.5 4.5 L8 1' stroke='#505050' stroke-width='1.3' fill='none'/></svg>
<div class='abs' style='left:0;top:834px;width:1520px;height:2px;background:#f4f6f8'></div>
<div id='status' class='abs'></div>
<div class='abs mono' style='left:0;top:843px;color:#00001c'>Version:1.0.0.52</div>
<div class='abs mono' style='left:1345px;top:843px;color:#fff'>Current [XT2149-x_Schematics]</div>
</body></html>
